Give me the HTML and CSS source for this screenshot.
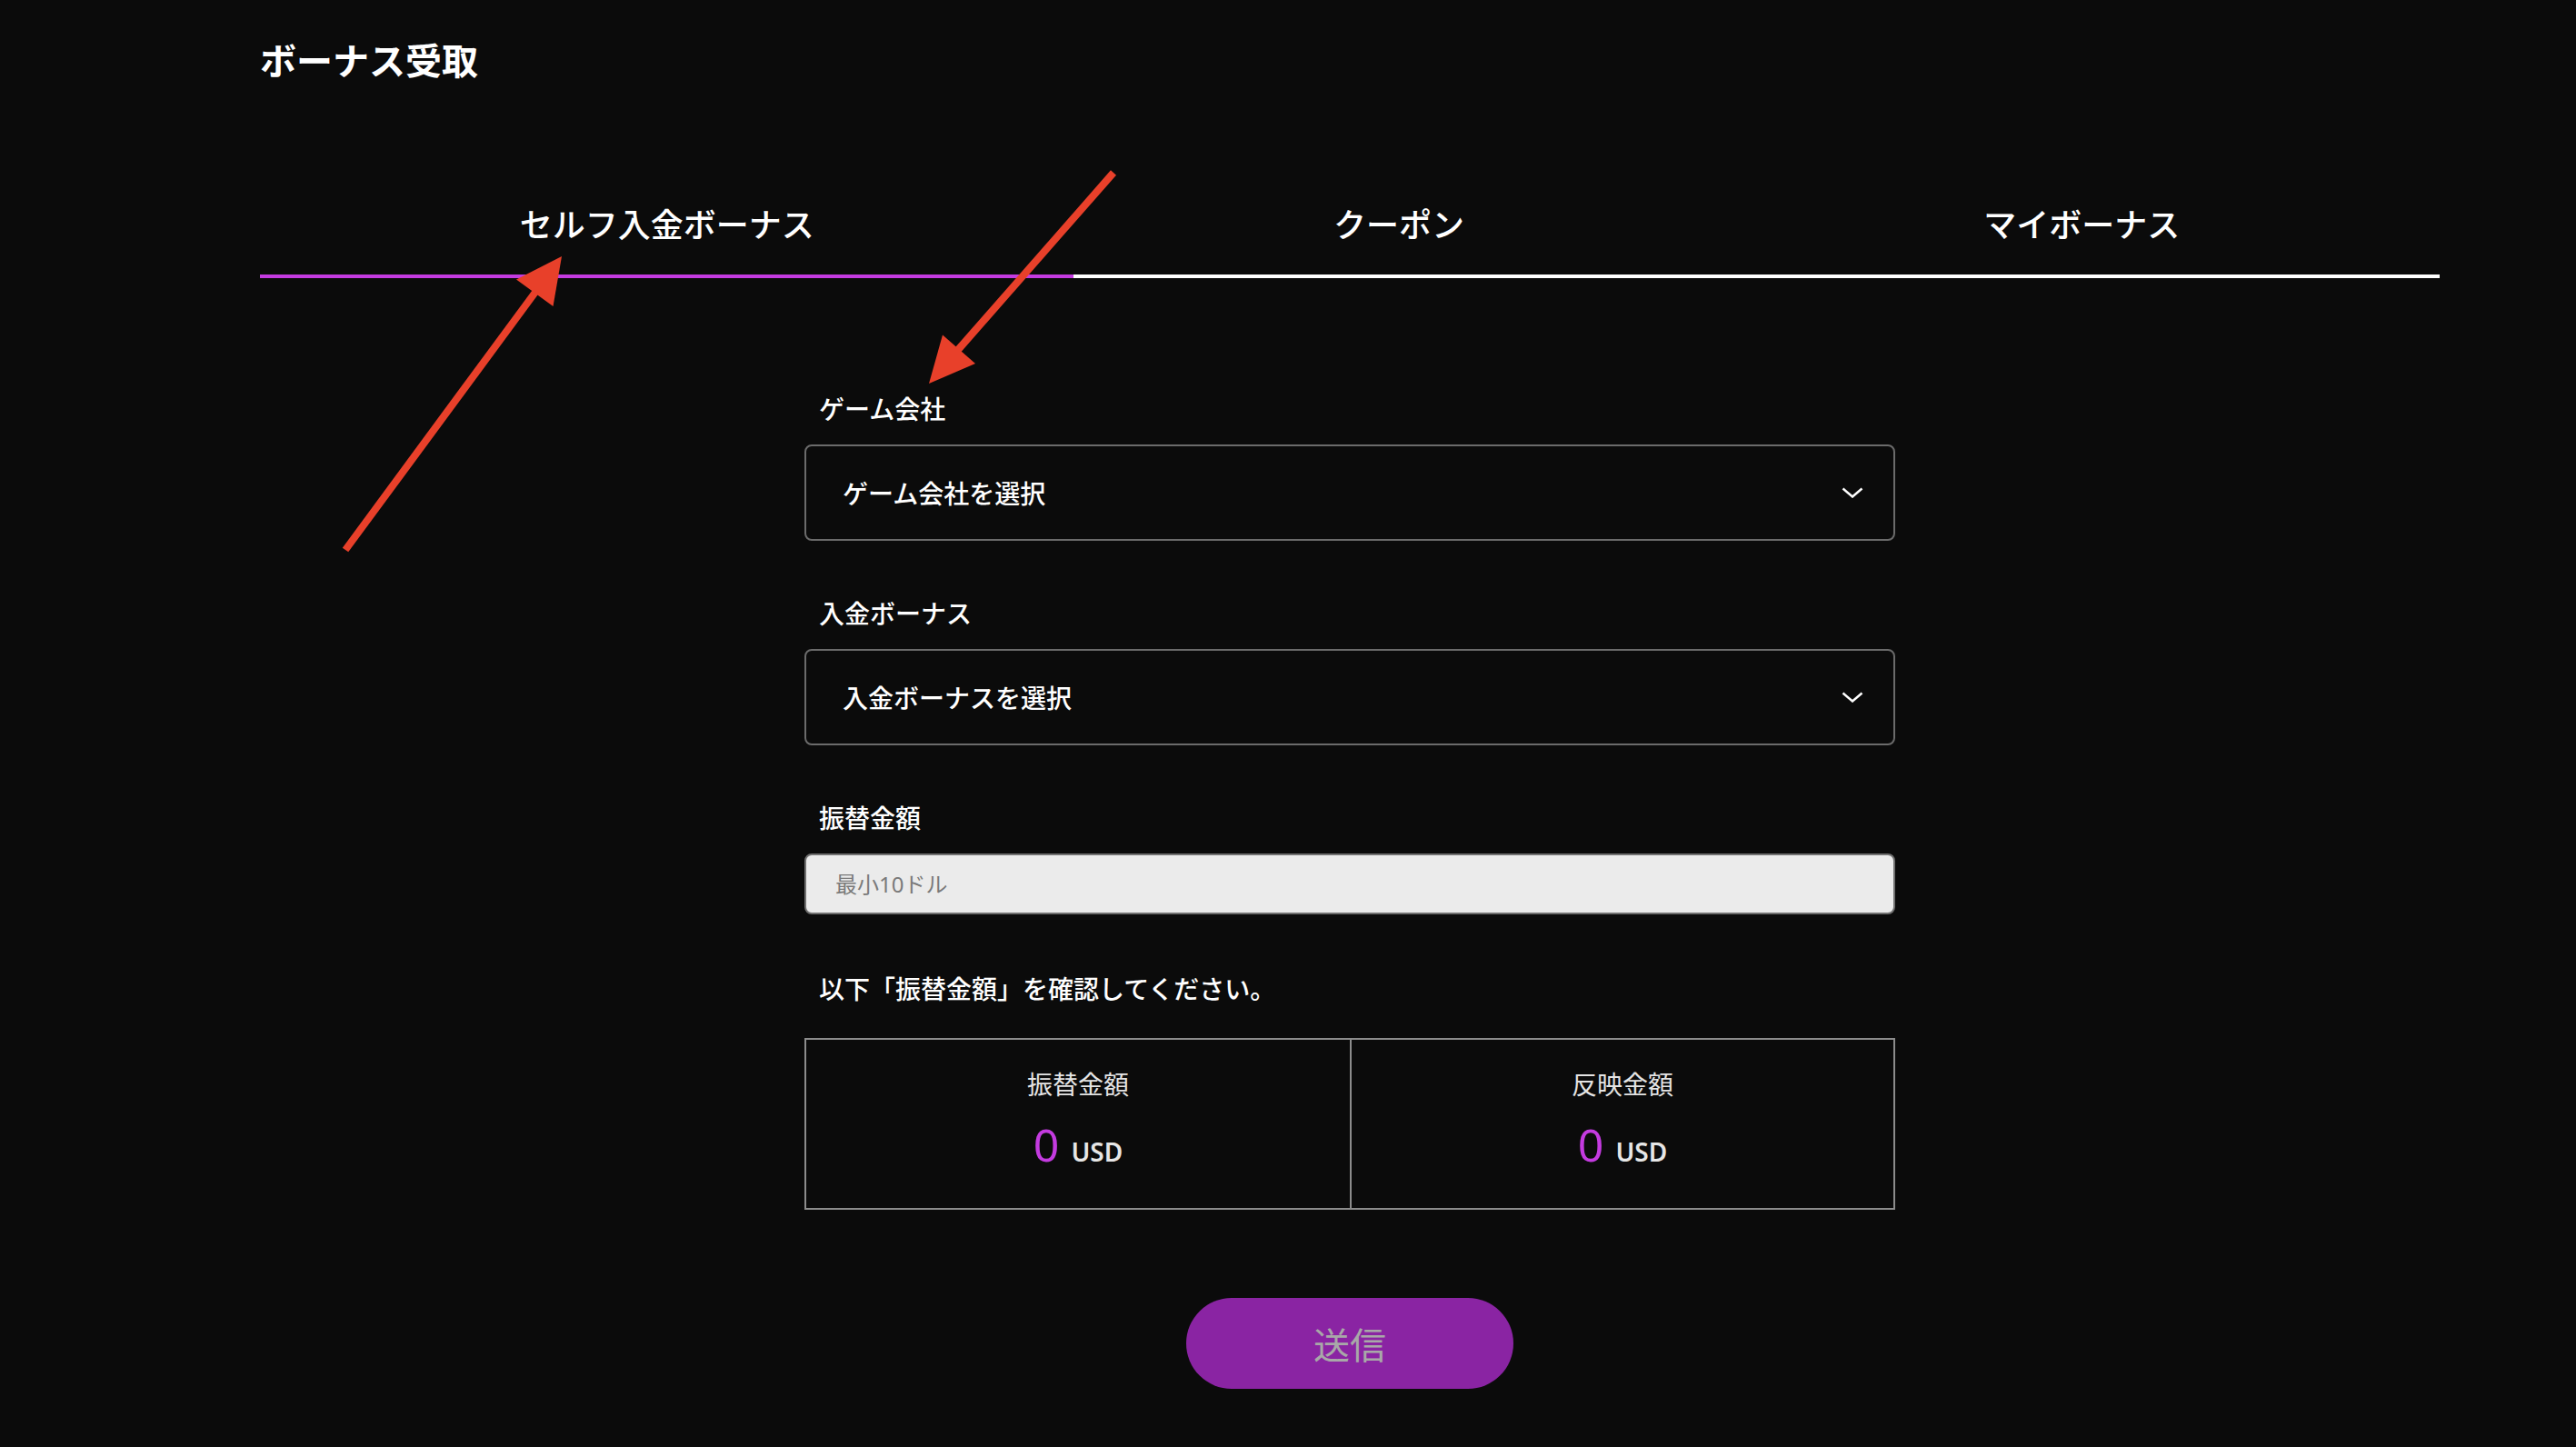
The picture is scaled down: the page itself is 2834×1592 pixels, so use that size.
FILE: index.html
```html
<!DOCTYPE html>
<html lang="ja">
<head>
<meta charset="utf-8">
<title>ボーナス受取</title>
<link rel="stylesheet" href="styles.css">
</head>
<body>
<div class="page">
  <h1 class="title">ボーナス受取</h1>
  <nav class="tabs">
    <div class="tab tab-active">セルフ入金ボーナス</div>
    <div class="tab">クーポン</div>
    <div class="tab">マイボーナス</div>
  </nav>
  <form class="form">
    <div class="field">
      <label class="label">ゲーム会社</label>
      <div class="select">
        <span>ゲーム会社を選択</span>
        <svg class="chevron" width="24" height="12" viewBox="0 0 24 12"><path d="M1.5 1.5 L12 10.5 L22.5 1.5" fill="none" stroke="#ffffff" stroke-width="2.5"/></svg>
      </div>
    </div>
    <div class="field">
      <label class="label">入金ボーナス</label>
      <div class="select">
        <span>入金ボーナスを選択</span>
        <svg class="chevron" width="24" height="12" viewBox="0 0 24 12"><path d="M1.5 1.5 L12 10.5 L22.5 1.5" fill="none" stroke="#ffffff" stroke-width="2.5"/></svg>
      </div>
    </div>
    <div class="field field-last">
      <label class="label">振替金額</label>
      <input class="input" type="text" placeholder="最小10ドル">
    </div>
    <p class="note">以下「振替金額」を確認してください。</p>
    <div class="summary">
      <div class="cell">
        <div class="cell-label">振替金額</div>
        <div class="cell-value"><span class="num">0</span><span class="unit">USD</span></div>
      </div>
      <div class="cell">
        <div class="cell-label">反映金額</div>
        <div class="cell-value"><span class="num">0</span><span class="unit">USD</span></div>
      </div>
    </div>
    <div class="actions">
      <button class="submit" type="button">送信</button>
    </div>
  </form>
</div>
<svg class="annotations" width="2834" height="1592" viewBox="0 0 2834 1592">
  <line x1="380" y1="605" x2="590" y2="320" stroke="#e8402a" stroke-width="8"/>
  <polygon points="618,282 568,307.5 608.5,337" fill="#e8402a"/>
  <line x1="1225" y1="190" x2="1053" y2="386" stroke="#e8402a" stroke-width="8"/>
  <polygon points="1022,422 1037,368.5 1073,400" fill="#e8402a"/>
</svg>
</body>
</html>
```

FILE: styles.css
```css
html, body {
  margin: 0;
  padding: 0;
  background: #0b0b0b;
}

body {
  width: 2834px;
  height: 1592px;
  overflow: hidden;
  position: relative;
  font-family: "Noto Sans", "Noto Sans CJK JP", sans-serif;
  color: #ffffff;
}

.page {
  padding: 43px 150px 0 286px;
}

.title {
  margin: 0;
  font-size: 40px;
  line-height: 48px;
  font-weight: 700;
}

.tabs {
  display: flex;
  margin-top: 135px;
}

.tab {
  flex: 1 1 auto;
  text-align: center;
  font-size: 36px;
  line-height: 44px;
  font-weight: 500;
  padding-bottom: 32px;
  border-bottom: 4px solid #ffffff;
}

.tab-active {
  border-bottom-color: #c43be0;
}

.form {
  width: 1200px;
  margin: 124px auto 0;
}

.field {
  margin-bottom: 60px;
}

.field-last {
  margin-bottom: 62px;
}

.label {
  display: block;
  padding-left: 16px;
  font-size: 28px;
  line-height: 40px;
  font-weight: 500;
  margin-bottom: 19px;
}

.select {
  box-sizing: border-box;
  height: 106px;
  border: 2px solid #6b6b6b;
  border-radius: 8px;
  display: flex;
  align-items: center;
  justify-content: space-between;
  padding: 0 33px 0 40px;
  font-size: 28px;
  font-weight: 500;
}

.chevron {
  display: block;
}

.input {
  display: block;
  box-sizing: border-box;
  width: 100%;
  height: 67px;
  margin: 0;
  border: 2px solid #707070;
  border-radius: 8px;
  background: #ebebeb;
  padding: 0 32px;
  font-family: "Noto Sans", "Noto Sans CJK JP", sans-serif;
  font-size: 24px;
  color: #333333;
  outline: none;
}

.input::placeholder {
  color: #7a7a7a;
}

.note {
  margin: 0 0 34px;
  padding-left: 16px;
  font-size: 28px;
  line-height: 40px;
  font-weight: 500;
}

.summary {
  display: grid;
  grid-template-columns: 1fr 1fr;
  border: 2px solid #8c8c8c;
  margin-bottom: 97px;
}

.cell {
  text-align: center;
  padding: 29px 0 40px;
}

.cell + .cell {
  border-left: 2px solid #8c8c8c;
}

.cell-label {
  font-size: 28px;
  line-height: 40px;
  color: #e4e4e4;
}

.cell-value {
  margin-top: 16px;
  height: 60px;
  line-height: 60px;
  display: flex;
  justify-content: center;
  align-items: baseline;
}

.num {
  font-size: 50px;
  color: #c43be0;
}

.unit {
  font-size: 28px;
  font-weight: 600;
  color: #e6e6e6;
  margin-left: 13px;
}

.actions {
  display: flex;
  justify-content: center;
}

.submit {
  width: 360px;
  height: 100px;
  border: none;
  border-radius: 50px;
  background: #8a24a3;
  color: #a8a8a8;
  font-family: "Noto Sans", "Noto Sans CJK JP", sans-serif;
  font-size: 40px;
  padding: 0;
}

.annotations {
  position: absolute;
  top: 0;
  left: 0;
  pointer-events: none;
}
```
